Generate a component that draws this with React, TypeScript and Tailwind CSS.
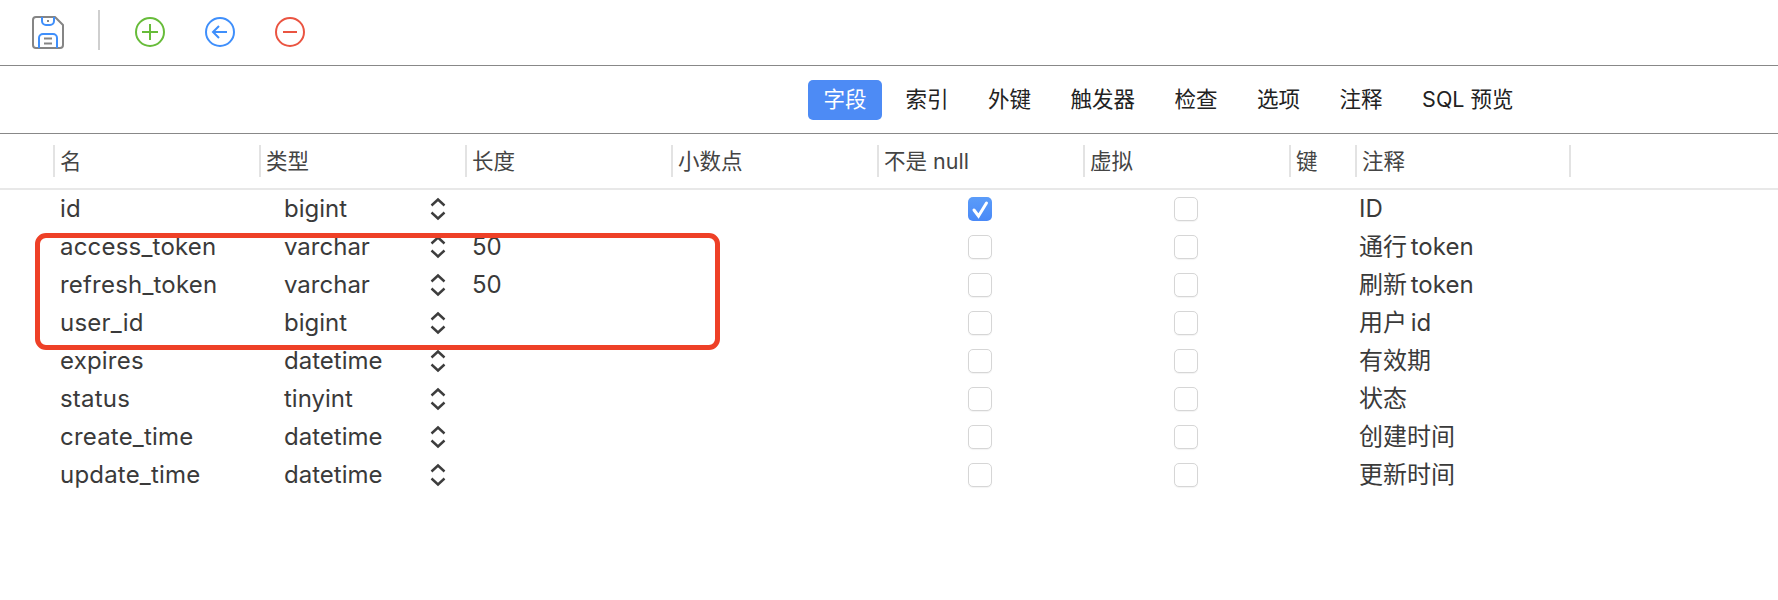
import { Fragment } from "react";

type Field = {
	name: string;
	type: string;
	length?: string;
	notNull?: boolean;
	comment: string;
};

const FIELDS: Field[] = [
	{ name: "id", type: "bigint", notNull: true, comment: "ID" },
	{ name: "access_token", type: "varchar", length: "50", comment: "通行 token" },
	{ name: "refresh_token", type: "varchar", length: "50", comment: "刷新 token" },
	{ name: "user_id", type: "bigint", comment: "用户 id" },
	{ name: "expires", type: "datetime", comment: "有效期" },
	{ name: "status", type: "tinyint", comment: "状态" },
	{ name: "create_time", type: "datetime", comment: "创建时间" },
	{ name: "update_time", type: "datetime", comment: "更新时间" }
];

const TABS = ["字段", "索引", "外键", "触发器", "检查", "选项", "注释", "SQL 预览"];
const COLUMNS = ["名", "类型", "长度", "小数点", "不是 null", "虚拟", "键", "注释"];

const GRID = "grid grid-cols-[53px_206px_206px_206px_206px_206px_206px_66px_216px]";

function SaveIcon() {
	return (
		<svg width="34" height="34" viewBox="0 0 34 34" fill="none" strokeWidth="2" className="shrink-0">
			<path d="M5 2h19l8 8v20a3 3 0 0 1-3 3H5a3 3 0 0 1-3-3V5a3 3 0 0 1 3-3z" stroke="#858585" strokeLinejoin="round" />
			<path d="M8 33V23a4 4 0 0 1 4-4h10a4 4 0 0 1 4 4v10" stroke="#3f8ffb" />
			<path d="M11 2v4a4 4 0 0 0 4 4h4a4 4 0 0 0 4-4V2" stroke="#3f8ffb" />
			<path d="M17 5v2M13 23.500h8M13 28.500h8" stroke="#858585" />
		</svg>
	);
}

function CircleIcon({ color, d }: { color: string; d: string }) {
	return (
		<svg width="32" height="32" viewBox="0 0 32 32" fill="none" stroke={color} strokeWidth="2" className="shrink-0">
			<circle cx="16" cy="16" r="14" />
			<path d={d} />
		</svg>
	);
}

function Chevrons() {
	return (
		<svg width="16" height="24" viewBox="0 0 16 24" fill="none" stroke="#3d3d3d" strokeWidth="2.400" className="shrink-0">
			<path d="M1.500 8.500 8 2.500l6.500 6M1.500 15.500 8 21.500l6.500-6" />
		</svg>
	);
}

function Checkbox({ checked }: { checked?: boolean }) {
	if (checked) {
		return (
			<span className="block size-6 rounded-[5px] bg-linear-to-b from-[#5b9cf9] to-[#4a89f7]">
				<svg width="24" height="24" viewBox="0 0 24 24" fill="none" stroke="#fff" strokeWidth="3" strokeLinecap="round">
					<path d="M6 13l4.500 6L18.500 6" />
				</svg>
			</span>
		);
	}
	return <span className="size-6 rounded-[5px] border border-[#d6d6d6] bg-white shadow-[0_1px_1px_rgba(0,0,0,0.05)]" />;
}

export default function App() {
	return (
		<div className="relative h-[600px] w-full overflow-hidden bg-white font-['Inter','Noto_Sans_CJK_SC',sans-serif] text-[24px] text-[#3a3a3a]">
			<div className="flex h-[66px] items-center border-[#888] border-b pb-px pl-[31px]">
				<SaveIcon />
				<div className="mr-[34px] mb-1 ml-[33px] h-10 w-0.5 bg-[#cfcfcf]" />
				<div className="flex gap-[38px]">
					<CircleIcon color="#67bc3a" d="M16 8v16M8 16h16" />
					<CircleIcon color="#3f8ffb" d="M23 16H9M15 10l-6 6 6 6" />
					<CircleIcon color="#ea5441" d="M9 16h14" />
				</div>
			</div>

			<div className="flex h-[68px] items-center gap-[7.500px] border-[#888] border-b pl-[808px] text-[21.500px] text-[#222]">
				{TABS.map((tab, i) => (
					<div
						className={
							i === 0
								? "flex h-10 items-center rounded-[5px] bg-[#4d8bf5] px-[15.500px] text-white"
								: "flex h-10 items-center px-4"
						}
						key={tab}
					>
						{tab}
					</div>
				))}
			</div>

			<div className={`${GRID} h-[56px] items-center border-[#e8e8e8] border-b-2 text-[21.500px]`}>
				<div />
				{COLUMNS.map((col, i) => (
					<div
						className={
							i === COLUMNS.length - 1
								? "flex h-8 items-center border-[#e3e3e3] border-x-2 pl-[5px] text-[#444]"
								: "flex h-8 items-center border-[#e3e3e3] border-l-2 pl-[5px] text-[#444]"
						}
						key={col}
					>
						{col}
					</div>
				))}
			</div>

			<div className={GRID}>
				{FIELDS.map((f) => (
					<Fragment key={f.name}>
						<div />
						<div className="flex h-[38px] items-center pl-[7px] tracking-[0.2px]">{f.name}</div>
						<div className="flex h-[38px] items-center justify-between pr-[19px] pl-[25px]">
							{f.type}
							<Chevrons />
						</div>
						<div className="flex h-[38px] items-center pl-[7px]">{f.length}</div>
						<div />
						<div className="flex h-[38px] items-center justify-center">
							<Checkbox checked={f.notNull} />
						</div>
						<div className="flex h-[38px] items-center justify-center">
							<Checkbox />
						</div>
						<div />
						<div className="flex h-[38px] items-center pl-[4px] [word-spacing:-3px]">{f.comment}</div>
					</Fragment>
				))}
			</div>

			{/* annotation drawn over the table */}
			<div className="absolute top-[233px] left-[35px] h-[117px] w-[685px] rounded-[11px] border-[#ee4027] border-[5px]" />
		</div>
	);
}
